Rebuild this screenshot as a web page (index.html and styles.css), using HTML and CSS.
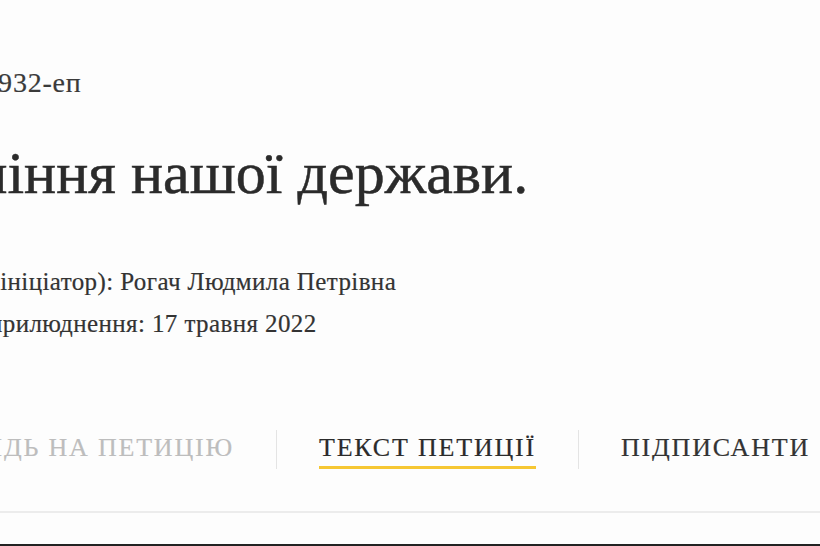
FILE: index.html
```html
<!DOCTYPE html>
<html lang="uk">
<head>
<meta charset="utf-8">
<title>Петиція</title>
<link rel="stylesheet" href="styles.css">
</head>
<body>
<div class="page">
  <div class="content">
    <p class="number">№22/143932-еп</p>
    <h1 class="title">Управління нашої держави.</h1>
    <p class="meta">Автор (ініціатор): Рогач Людмила Петрівна</p>
    <p class="meta">Дата оприлюднення: 17 травня 2022</p>
    <nav class="tabs">
      <div class="tab tab-muted"><span class="tab-label">Відповідь на петицію</span></div>
      <div class="tab tab-active"><span class="tab-label">Текст петиції</span></div>
      <div class="tab"><span class="tab-label">Підписанти</span></div>
    </nav>
  </div>
  <div class="divider"></div>
  <div class="bottom-bar"></div>
</div>
</body>
</html>
```
FILE: styles.css
```css
html, body {
  margin: 0;
  padding: 0;
  background: #fdfdfd;
  overflow: hidden;
}
.page {
  width: 820px;
  height: 546px;
  overflow: hidden;
  font-family: "Liberation Serif", "DejaVu Serif", serif;
  color: #333;
}
.content {
  margin-left: -82px;
  padding-top: 68px;
  white-space: nowrap;
}
.number {
  margin: 0 0 0 -30px;
  font-size: 28px;
  line-height: 30px;
  letter-spacing: 0.8px;
  color: #3a3a3a;
  -webkit-text-stroke: 0.2px #3a3a3a;
}
.title {
  margin: 40px 0 0 -94px;
  font-size: 60px;
  line-height: 70px;
  font-weight: normal;
  color: #2b2b2b;
  -webkit-text-stroke: 0.5px #2b2b2b;
}
.meta {
  margin: 0;
  font-size: 25px;
  line-height: 42px;
  letter-spacing: 0.4px;
  color: #333;
  -webkit-text-stroke: 0.2px #333;
}
.title + .meta {
  margin-top: 53px;
}
.tabs {
  display: flex;
  margin-top: 85px;
  margin-left: -76px;
}
.tab {
  padding: 3px 42px 0;
  height: 36px;
  border-left: 1px solid #e4e4e4;
}
.tab:first-child {
  border-left: none;
}
.tab-label {
  display: inline-block;
  font-size: 26px;
  line-height: 30px;
  letter-spacing: 1.8px;
  text-transform: uppercase;
  color: #333;
  padding-bottom: 3px;
  border-bottom: 3px solid transparent;
  -webkit-text-stroke: 0.2px currentColor;
}
.tab-muted .tab-label {
  color: #bdbdbd;
}
.tab-active .tab-label {
  color: #2b2b2b;
  border-bottom-color: #f6c733;
}
.divider {
  margin-top: 42px;
  height: 2px;
  background: #ececec;
}
.bottom-bar {
  margin-top: 31px;
  height: 4px;
  background: #222;
}
```
